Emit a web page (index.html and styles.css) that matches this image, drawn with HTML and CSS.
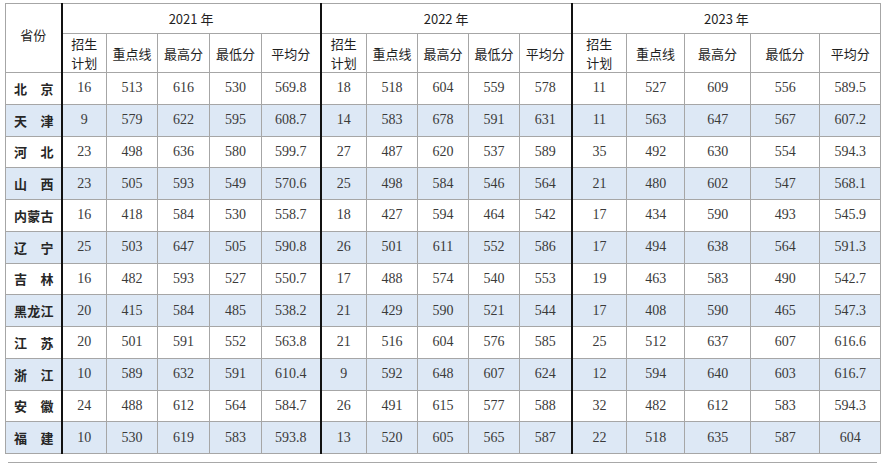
FILE: index.html
```html
<!DOCTYPE html>
<html lang="zh">
<head>
<meta charset="utf-8">
<link rel="stylesheet" href="styles.css">
</head>
<body>
<div class="page">
<table class="scores">
<colgroup>
<col class="c-prov">
<col style="width:45px"><col style="width:51px"><col style="width:52px"><col style="width:52px"><col style="width:59px">
<col style="width:46px"><col style="width:51px"><col style="width:51px"><col style="width:51px"><col style="width:52px">
<col style="width:55px"><col style="width:58px"><col style="width:66px"><col style="width:69px"><col style="width:61px">
</colgroup>
<thead>
<tr class="h1">
<th rowspan="2" class="prov-h">省份</th>
<th colspan="5" class="yr">2021 年</th>
<th colspan="5" class="yr">2022 年</th>
<th colspan="5" class="yr">2023 年</th>
</tr>
<tr class="h2">
<th class="first"><span class="ln">招生</span><span class="ln">计划</span></th><th>重点线</th><th>最高分</th><th>最低分</th><th>平均分</th>
<th class="first"><span class="ln">招生</span><span class="ln">计划</span></th><th>重点线</th><th>最高分</th><th>最低分</th><th>平均分</th>
<th class="first"><span class="ln">招生</span><span class="ln">计划</span></th><th>重点线</th><th>最高分</th><th>最低分</th><th>平均分</th>
</tr>
</thead>
<tbody>
<tr><th class="prov">北京</th><td class="first">16</td><td>513</td><td>616</td><td>530</td><td>569.8</td><td class="first">18</td><td>518</td><td>604</td><td>559</td><td>578</td><td class="first">11</td><td>527</td><td>609</td><td>556</td><td>589.5</td></tr>
<tr class="alt"><th class="prov">天津</th><td class="first">9</td><td>579</td><td>622</td><td>595</td><td>608.7</td><td class="first">14</td><td>583</td><td>678</td><td>591</td><td>631</td><td class="first">11</td><td>563</td><td>647</td><td>567</td><td>607.2</td></tr>
<tr><th class="prov">河北</th><td class="first">23</td><td>498</td><td>636</td><td>580</td><td>599.7</td><td class="first">27</td><td>487</td><td>620</td><td>537</td><td>589</td><td class="first">35</td><td>492</td><td>630</td><td>554</td><td>594.3</td></tr>
<tr class="alt"><th class="prov">山西</th><td class="first">23</td><td>505</td><td>593</td><td>549</td><td>570.6</td><td class="first">25</td><td>498</td><td>584</td><td>546</td><td>564</td><td class="first">21</td><td>480</td><td>602</td><td>547</td><td>568.1</td></tr>
<tr><th class="prov">内蒙古</th><td class="first">16</td><td>418</td><td>584</td><td>530</td><td>558.7</td><td class="first">18</td><td>427</td><td>594</td><td>464</td><td>542</td><td class="first">17</td><td>434</td><td>590</td><td>493</td><td>545.9</td></tr>
<tr class="alt"><th class="prov">辽宁</th><td class="first">25</td><td>503</td><td>647</td><td>505</td><td>590.8</td><td class="first">26</td><td>501</td><td>611</td><td>552</td><td>586</td><td class="first">17</td><td>494</td><td>638</td><td>564</td><td>591.3</td></tr>
<tr><th class="prov">吉林</th><td class="first">16</td><td>482</td><td>593</td><td>527</td><td>550.7</td><td class="first">17</td><td>488</td><td>574</td><td>540</td><td>553</td><td class="first">19</td><td>463</td><td>583</td><td>490</td><td>542.7</td></tr>
<tr class="alt"><th class="prov">黑龙江</th><td class="first">20</td><td>415</td><td>584</td><td>485</td><td>538.2</td><td class="first">21</td><td>429</td><td>590</td><td>521</td><td>544</td><td class="first">17</td><td>408</td><td>590</td><td>465</td><td>547.3</td></tr>
<tr><th class="prov">江苏</th><td class="first">20</td><td>501</td><td>591</td><td>552</td><td>563.8</td><td class="first">21</td><td>516</td><td>604</td><td>576</td><td>585</td><td class="first">25</td><td>512</td><td>637</td><td>607</td><td>616.6</td></tr>
<tr class="alt"><th class="prov">浙江</th><td class="first">10</td><td>589</td><td>632</td><td>591</td><td>610.4</td><td class="first">9</td><td>592</td><td>648</td><td>607</td><td>624</td><td class="first">12</td><td>594</td><td>640</td><td>603</td><td>616.7</td></tr>
<tr><th class="prov">安徽</th><td class="first">24</td><td>488</td><td>612</td><td>564</td><td>584.7</td><td class="first">26</td><td>491</td><td>615</td><td>577</td><td>588</td><td class="first">32</td><td>482</td><td>612</td><td>583</td><td>594.3</td></tr>
<tr class="alt"><th class="prov">福建</th><td class="first">10</td><td>530</td><td>619</td><td>583</td><td>593.8</td><td class="first">13</td><td>520</td><td>605</td><td>565</td><td>587</td><td class="first">22</td><td>518</td><td>635</td><td>587</td><td>604</td></tr>
</tbody>
</table>
<div class="rule"></div>
</div>
</body>
</html>
```

FILE: styles.css
```css
html, body {
  margin: 0;
  padding: 0;
  background: #ffffff;
}

.page {
  padding: 3px 0 0 5px;
}

.scores {
  border-collapse: collapse;
  table-layout: fixed;
  width: 875px;
  border: 1.5px solid #8a8a8a;
  color: #262626;
}

.c-prov {
  width: 56px;
}

.scores th,
.scores td {
  border: 1px solid #a6a6a6;
  padding: 0;
  text-align: center;
  vertical-align: middle;
  overflow: hidden;
}

.scores thead th {
  font-family: "Noto Sans CJK SC", "Noto Sans", sans-serif;
  font-size: 13px;
  font-weight: 400;
  line-height: 17px;
  color: #1f1f1f;
}

.ln {
  display: block;
  line-height: 19px;
}

.h1 {
  height: 30px;
}

.h2 {
  height: 39px;
}

.scores .prov-h {
  border-right: 2px solid #111111;
  padding-bottom: 8px;
}

.scores .first {
  border-left: 2px solid #111111;
}

.scores .yr {
  border-left: 2px solid #111111;
}

.scores tbody tr {
  height: 31.75px;
}

.scores tbody tr.alt {
  background: #dde8f5;
}

.scores td {
  font-family: "Liberation Serif", "Noto Sans CJK SC", serif;
  font-size: 14px;
  color: #3a3a3a;
}

.scores .prov {
  font-family: "Noto Sans CJK SC", "Noto Sans", sans-serif;
  font-size: 13px;
  font-weight: 700;
  color: #262626;
  text-align: justify;
  text-align-last: justify;
  text-justify: inter-character;
  padding: 0 7px 0 8px;
  border-right: 2px solid #111111;
}

.rule {
  margin: 8px 0 0 3px;
  width: 869px;
  height: 1px;
  background: #a8a8a8;
}
```
